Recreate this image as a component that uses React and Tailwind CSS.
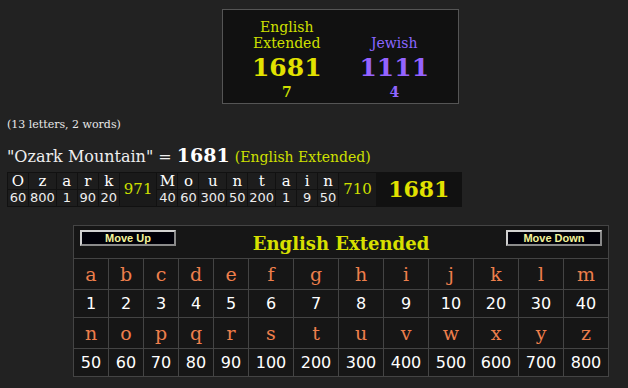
const serif = "font-['DejaVu_Serif',serif]";
const sans = "font-['DejaVu_Sans',sans-serif]";

const words = [
  { letters: [["O", 60], ["z", 800], ["a", 1], ["r", 90], ["k", 20]], sum: 971 },
  {
    letters: [["M", 40], ["o", 60], ["u", 300], ["n", 50], ["t", 200], ["a", 1], ["i", 9], ["n", 50]],
    sum: 710,
  },
];

const alphabet = "abcdefghijklmnopqrstuvwxyz".split("");
const values = [1, 2, 3, 4, 5, 6, 7, 8, 9, 10, 20, 30, 40, 50, 60, 70, 80, 90, 100, 200, 300, 400, 500, 600, 700, 800];

function MoveButton({ label }) {
  return (
    <button className="w-[96px] h-[16px] bg-[#000008] border-2 border-t-[#d0d0d0] border-l-[#d0d0d0] border-r-[#8a8a8a] border-b-[#8a8a8a] text-[#f4f49a] text-[11px] font-bold leading-none font-['Liberation_Sans',sans-serif] flex items-center justify-center">
      {label}
    </button>
  );
}

function LetterRow({ from, to, kind }) {
  const cells = [];
  for (let i = from; i < to; i++) {
    if (kind === "letter") {
      cells.push(
        <div key={i} className={`bg-[#161616] h-[30px] flex items-center justify-center text-[#ee7f4c] text-[19px] ${serif}`}>
          {alphabet[i]}
        </div>
      );
    } else {
      cells.push(
        <div key={i} className={`bg-[#161616] h-[27px] flex items-center justify-center text-white text-[16px] ${sans}`}>
          {values[i]}
        </div>
      );
    }
  }
  return cells;
}

export default function App() {
  return (
    <div className={`min-h-screen bg-[#222] text-white ${serif}`}>
      <div className="pt-[9px] pl-[222px]">
        <div className="w-[237px] h-[95px] border border-[#555] bg-[#111] flex px-[10px] pt-[9px]">
          <div className="flex-1 flex flex-col items-center">
            <div className="h-[32px] flex flex-col justify-end items-center text-[14px] leading-[16px] text-[#cfe000]">
              <span>English</span>
              <span>Extended</span>
            </div>
            <div className="mt-[3px] text-[25px] leading-[28px] font-bold text-[#e2e200]">1681</div>
            <div className="mt-[3px] text-[14px] leading-[14px] font-bold text-[#cfe000]">7</div>
          </div>
          <div className="flex-1 flex flex-col items-center">
            <div className="h-[32px] flex flex-col justify-end items-center text-[14px] leading-[16px] text-[#8a66ff]">
              <span>Jewish</span>
            </div>
            <div className="mt-[3px] text-[25px] leading-[28px] font-bold text-[#9563ff]">1111</div>
            <div className="mt-[3px] text-[14px] leading-[14px] font-bold text-[#9066ff]">4</div>
          </div>
        </div>
      </div>

      <p className="mt-[14px] pl-[7px] text-[11px] leading-[14px] text-[#e8e8e8]">(13 letters, 2 words)</p>

      <p className="mt-[11px] pl-[7px] text-[16px] leading-[24px] text-[#eee] whitespace-nowrap">
        "Ozark Mountain" = <span className="text-[19px] font-bold text-white">1681</span>{" "}
        <span className="text-[14px] text-[#cfe000]">(English Extended)</span>
      </p>

      <div className="mt-[3px] pl-[7px]">
        <table className="bg-[#111] border-separate border-spacing-[1px]">
          <tbody>
            <tr>
              {words.map((w, wi) => [
                ...w.letters.map(([l], i) => (
                  <td key={`l${wi}-${i}`} className={`bg-[#1d1d1d] min-w-[20px] px-[1px] h-[16px] text-center text-[15px] leading-[16px] text-white ${serif}`}>
                    {l}
                  </td>
                )),
                <td key={`s${wi}`} rowSpan={2} className="bg-[#1a1a1a] px-[4px] text-center text-[15px] text-[#cfe000]">
                  {w.sum}
                </td>,
              ])}
              <td rowSpan={2} className="bg-[#111] w-[84px] text-center text-[22px] font-bold text-[#e2e200]">
                1681
              </td>
            </tr>
            <tr>
              {words.map((w, wi) =>
                w.letters.map(([, v], i) => (
                  <td key={`v${wi}-${i}`} className={`bg-[#1d1d1d] px-[1px] h-[16px] text-center text-[13px] leading-[16px] text-[#eee] ${sans}`}>
                    {v}
                  </td>
                ))
              )}
            </tr>
          </tbody>
        </table>
      </div>

      <div className="mt-[18px] pl-[73px]">
        <div className="w-[536px] bg-[#444] p-px grid grid-cols-[repeat(5,34px)_repeat(8,44px)] gap-px">
          <div className="col-span-13 bg-[#161616] h-[32px] flex items-start justify-between px-[6px] pt-[4px]">
            <MoveButton label="Move Up" />
            <div className="flex-1 text-center text-[18px] leading-[26px] font-bold text-[#d8e000] mt-[1px]">English Extended</div>
            <MoveButton label="Move Down" />
          </div>
          <LetterRow from={0} to={13} kind="letter" />
          <LetterRow from={0} to={13} kind="value" />
          <LetterRow from={13} to={26} kind="letter" />
          <LetterRow from={13} to={26} kind="value" />
        </div>
      </div>
    </div>
  );
}
